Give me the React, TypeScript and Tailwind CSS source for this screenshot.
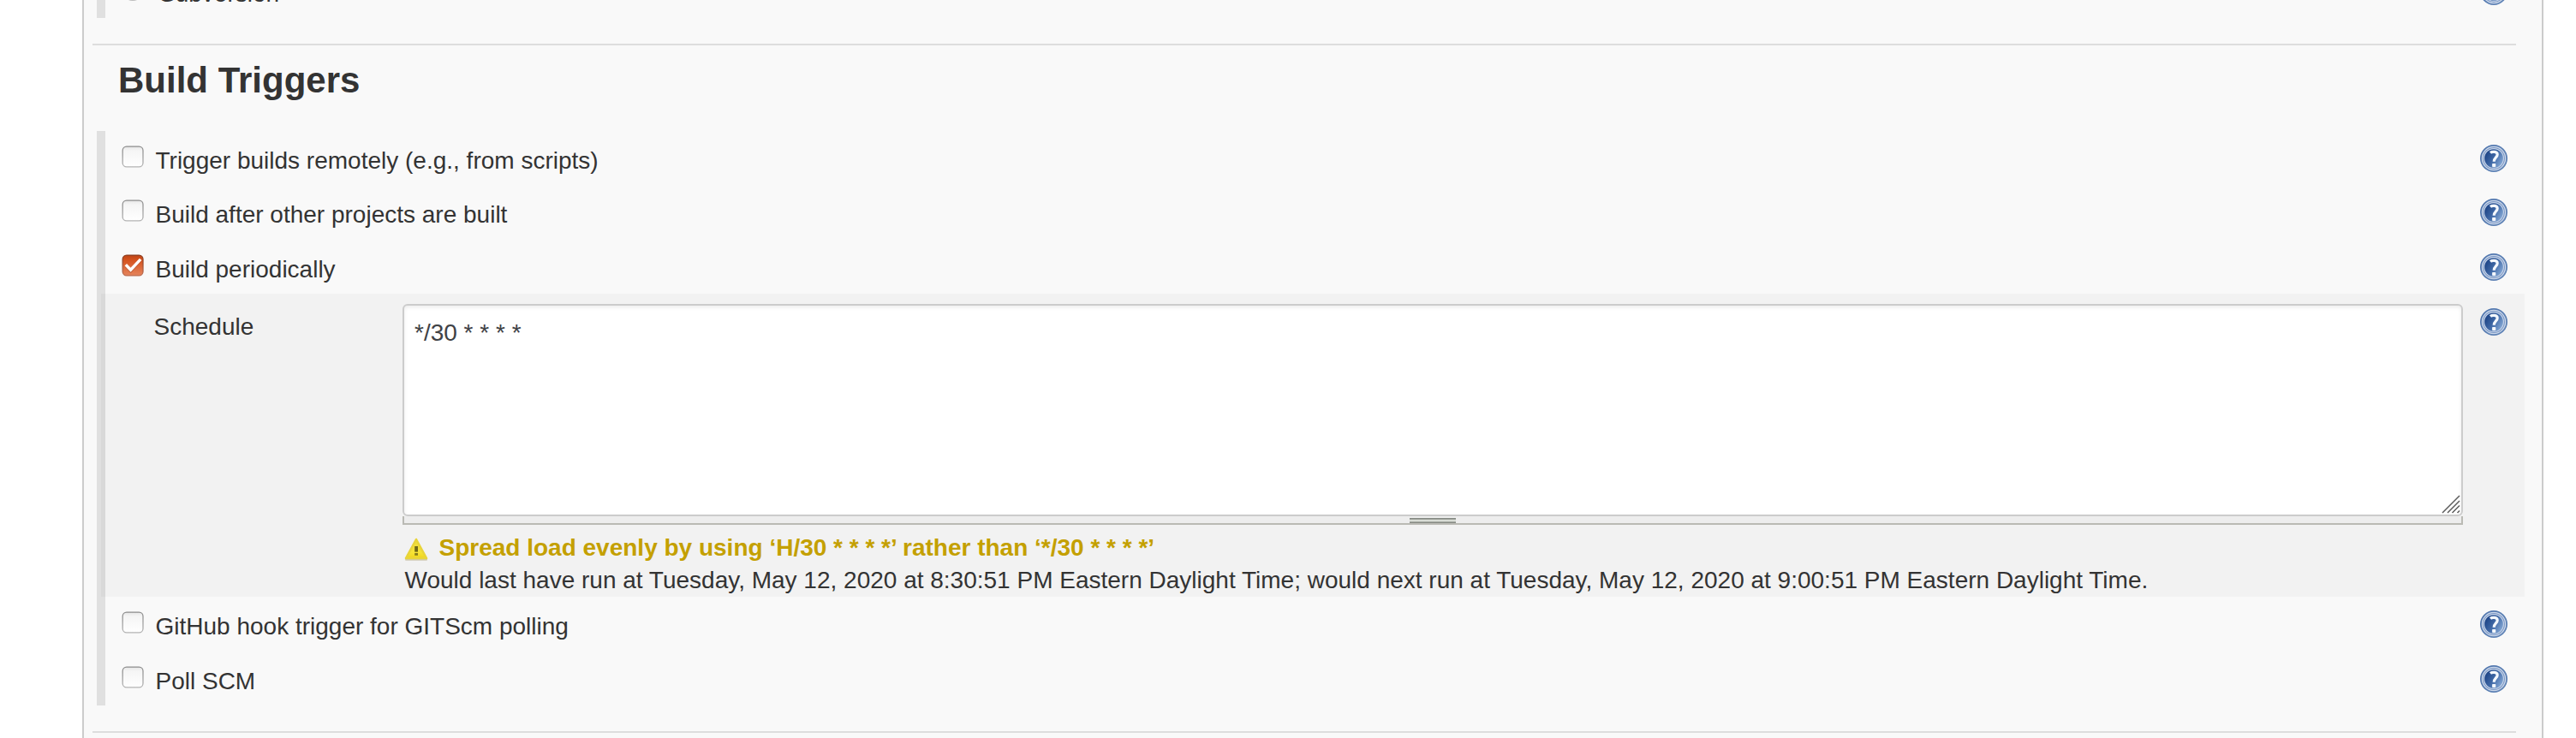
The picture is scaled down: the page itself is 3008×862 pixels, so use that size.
import React from "react";

function HelpIcon() {
  return (
    <svg width="32" height="32" viewBox="0 0 32 32" className="block shrink-0" role="img" aria-label="Help">
      <defs>
        <linearGradient id="helpFill" x1="0" y1="0.2" x2="1" y2="0.8">
          <stop offset="0.1" stopColor="#1f4688" />
          <stop offset="0.5" stopColor="#4069a6" />
          <stop offset="0.95" stopColor="#86a9d6" />
        </linearGradient>
        <linearGradient id="helpRim" x1="0" y1="0" x2="1" y2="1">
          <stop offset="0" stopColor="#4d73ac" />
          <stop offset="1" stopColor="#6487b8" />
        </linearGradient>
      </defs>
      <circle cx="16" cy="16" r="16" fill="url(#helpRim)" />
      <circle cx="16" cy="16" r="13.6" fill="#7895c3" stroke="#ccd8ea" strokeWidth="1.3" />
      <circle cx="16" cy="16" r="11.4" fill="url(#helpFill)" stroke="#c9d6ea" strokeWidth="1.1" />
      <path d="M12 9.4C13.8 7.9 20.2 7.5 20.2 11.5C20.2 14.8 16.2 15.2 16.2 19.8" fill="none" stroke="#f4f8fd" strokeWidth="3.2" />
      <rect x="14.1" y="22" width="4.2" height="4" rx="0.8" fill="#f4f8fd" />
    </svg>
  );
}

function Checkbox({ checked = false }: { checked?: boolean }) {
  return (
    <svg width="26" height="26" viewBox="0 0 26 26" className="block shrink-0">
      <defs>
        <linearGradient id="boxOff" x1="0" y1="0" x2="0" y2="1">
          <stop offset="0" stopColor="#e6e6e6" />
          <stop offset="0.2" stopColor="#f5f5f5" />
          <stop offset="1" stopColor="#ffffff" />
        </linearGradient>
        <linearGradient id="boxOffLine" x1="0" y1="0" x2="0" y2="1">
          <stop offset="0" stopColor="#8c8c8c" />
          <stop offset="1" stopColor="#b4b4b4" />
        </linearGradient>
        <linearGradient id="boxOn" x1="0" y1="0" x2="0" y2="1">
          <stop offset="0" stopColor="#c04516" />
          <stop offset="0.25" stopColor="#d5531f" />
          <stop offset="1" stopColor="#e5855d" />
        </linearGradient>
        <linearGradient id="boxOnLine" x1="0" y1="0" x2="0" y2="1">
          <stop offset="0" stopColor="#8a3a1c" />
          <stop offset="1" stopColor="#bd6c50" />
        </linearGradient>
      </defs>
      <rect
        x="1.2"
        y="1.1"
        width="23.8"
        height="23.8"
        rx="4.6"
        fill={checked ? "url(#boxOn)" : "url(#boxOff)"}
        stroke={checked ? "url(#boxOnLine)" : "url(#boxOffLine)"}
        strokeWidth="1.3"
      />
      {checked && (
        <>
          <path d="M4.8 13.4L10.6 19.6L22.2 6.8" fill="none" stroke="#973a17" strokeOpacity="0.5" strokeWidth="3.2" />
          <path d="M4.8 12.2L10.6 18.2L22.2 5.8" fill="none" stroke="#ffffff" strokeWidth="3.4" />
        </>
      )}
    </svg>
  );
}

function WarningIcon() {
  return (
    <svg width="32" height="32" viewBox="0 0 32 32" className="block shrink-0">
      <defs>
        <linearGradient id="warnFill" x1="0" y1="0" x2="0" y2="1">
          <stop offset="0" stopColor="#eedc3c" />
          <stop offset="0.7" stopColor="#f6e336" />
          <stop offset="1" stopColor="#f0d51c" />
        </linearGradient>
      </defs>
      <path d="M4 29.8H28" stroke="#b9b08a" strokeWidth="2" strokeLinecap="round" opacity="0.6" />
      <path d="M16 6L28 28H4Z" fill="url(#warnFill)" stroke="#e8d43a" strokeWidth="2.6" strokeLinejoin="round" />
      <rect x="14.2" y="14" width="3.8" height="6.6" fill="#6e6716" />
      <rect x="14.2" y="22" width="3.8" height="2.8" fill="#857c1c" />
    </svg>
  );
}

function TriggerRow({ label, checked, className }: { label: string; checked?: boolean; className: string }) {
  return (
    <div className={`flex shrink-0 items-start pl-[29px] pr-5 ${className}`}>
      <div className="pt-[17px]">
        <Checkbox checked={checked} />
      </div>
      <div className="grow pl-[13.5px] pt-[19px] leading-8">{label}</div>
      <div className="pt-4">
        <HelpIcon />
      </div>
    </div>
  );
}

export default function App() {
  return (
    <div className="h-[862px] w-[3008px] overflow-hidden bg-white pl-24 font-['Liberation_Sans',Arial,sans-serif] text-[28px] text-[#333]">
      <main className="flex h-full w-[2874px] flex-col overflow-hidden border-x-2 border-[#ccc] bg-[#f9f9f9]">
        <section className="ml-[15px] mr-5 flex h-[21px] shrink-0 items-end overflow-hidden border-l-10 border-[#e0e0e0]">
          <div className="flex h-[63px] grow items-start pl-[19px] pr-5">
            <div className="mt-[17px] size-[26px] shrink-0 rounded-full border-2 border-[#bbb] bg-white" />
            <div className="grow pl-[18px] pt-[19px] leading-8">Subversion</div>
            <div className="pt-4">
              <HelpIcon />
            </div>
          </div>
        </section>

        <hr className="ml-2.5 mt-[30px] w-[2830px] shrink-0 border-0 border-t-2 border-[#ddd]" />
        <h2 className="mb-[33px] ml-10 mt-[15px] h-[52px] shrink-0 text-[42px] font-bold leading-[52px]">Build Triggers</h2>

        <section className="ml-[15px] mr-5 flex h-[671px] shrink-0 flex-col bg-[linear-gradient(to_right,#e0e0e0_10px,transparent_10px)]">
          <TriggerRow label="Trigger builds remotely (e.g., from scripts)" className="h-[63px]" />
          <TriggerRow label="Build after other projects are built" className="h-16" />
          <TriggerRow label="Build periodically" checked className="h-[63px]" />

          <div className="ml-[5px] flex h-[354px] shrink-0 items-start bg-black/[0.028] pr-5">
            <div className="w-[352px] shrink-0 pl-[61.5px] pt-[23px] leading-8">Schedule</div>
            <div className="w-[2406px] pt-3">
              <div className="relative h-[248px] rounded-md border-2 border-[#ccc] bg-white px-3 pt-4 leading-8 text-[#3f4246] shadow-[inset_0_2px_4px_rgba(0,0,0,0.08)]">
                */30 * * * *
                <svg width="22" height="22" viewBox="0 0 22 22" className="absolute bottom-[1px] right-[1px]">
                  <path d="M1 21L21 1M7 21L21 7M12.5 21L21 12.5M18.5 21L21 18.5" stroke="#5c5c5c" strokeWidth="1.5" />
                </svg>
              </div>
              <div className="flex h-2.5 justify-center border-x-2 border-b-2 border-[#babab4] bg-[#ededed] pt-0.5">
                <div className="flex h-1.5 w-[54px] flex-col justify-between border-y border-[#868a84] bg-[#d8dcd5]">
                  <div className="h-px bg-[#9b9f99]" />
                  <div className="h-px bg-[#a9ada6]" />
                </div>
              </div>
              <div className="mt-[11px] flex h-8 items-start">
                <WarningIcon />
                <div className="pl-[10.5px] font-bold leading-8 text-[#c4a000]">
                  Spread load evenly by using ‘H/30 * * * *’ rather than ‘*/30 * * * *’
                </div>
              </div>
              <div className="mt-1.5 whitespace-nowrap pl-[2.5px] leading-8">
                Would last have run at Tuesday, May 12, 2020 at 8:30:51 PM Eastern Daylight Time; would next run at Tuesday,
                May 12, 2020 at 9:00:51 PM Eastern Daylight Time.
              </div>
            </div>
            <div className="ml-5 pt-[17px]">
              <HelpIcon />
            </div>
          </div>

          <TriggerRow label="GitHub hook trigger for GITScm polling" className="h-16" />
          <TriggerRow label="Poll SCM" className="h-[63px]" />
        </section>

        <hr className="ml-2.5 mt-[30px] w-[2830px] shrink-0 border-0 border-t-2 border-[#ddd]" />
      </main>
    </div>
  );
}
